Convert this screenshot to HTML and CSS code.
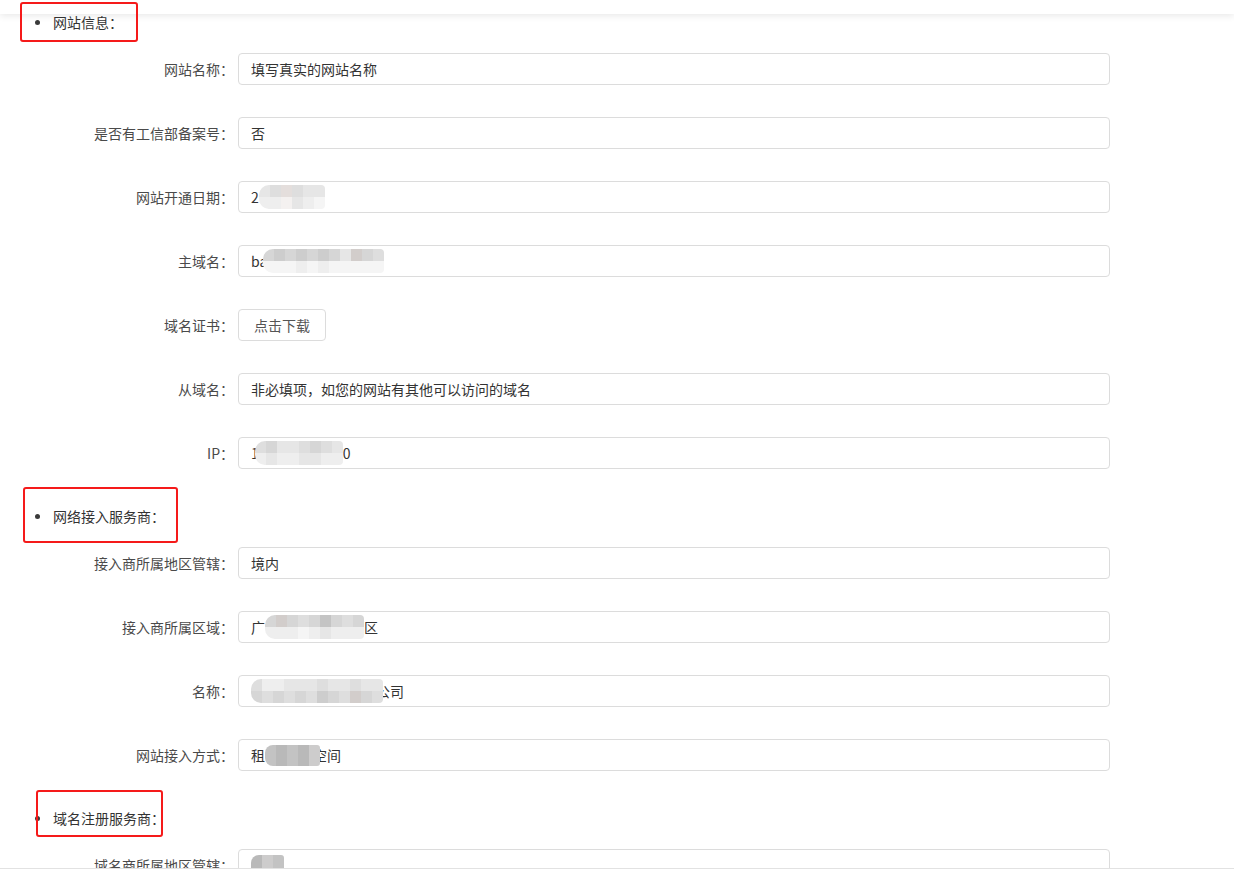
FILE: index.html
```html
<!DOCTYPE html>
<html lang="zh-CN">
<head>
<meta charset="utf-8">
<title>网站备案信息</title>
<link rel="stylesheet" href="styles.css">
</head>
<body>
<div class="topbar"></div>
<div class="page">
  <section class="section">
    <h3 class="heading">网站信息：<span class="mark mark-1"></span></h3>
    <div class="row"><label class="label">网站名称：</label><div class="field">填写真实的网站名称</div></div>
    <div class="row"><label class="label">是否有工信部备案号：</label><div class="field">否</div></div>
    <div class="row"><label class="label">网站开通日期：</label><div class="field">2<span class="mosaic">
      <i class="s5"></i><i class="s6"></i><i class="s4"></i><i class="s6"></i><i class="s3w"></i><i class="s6w"></i><i class="s4"></i><i class="s5"></i><i class="s5"></i><i class="s6"></i><i class="s5"></i><i class="s7"></i>
    </span></div></div>
    <div class="row"><label class="label">主域名：</label><div class="field">ba<span class="mosaic mosaic-over">
      <i class="s3"></i><i class="s7"></i><i class="s2"></i><i class="s7"></i><i class="s3"></i><i class="s7"></i><i class="s2"></i><i class="s6"></i><i class="s3"></i><i class="s7"></i><i class="s2"></i><i class="s6"></i><i class="s3"></i><i class="s7"></i><i class="s5"></i><i class="s7"></i><i class="s2w"></i><i class="s7"></i><i class="s3"></i><i class="s7"></i><i class="s4"></i><i class="s7"></i>
    </span></div></div>
    <div class="row"><label class="label">域名证书：</label><div class="cell"><button class="btn" type="button">点击下载</button></div></div>
    <div class="row"><label class="label">从域名：</label><div class="field">非必填项，如您的网站有其他可以访问的域名</div></div>
    <div class="row"><label class="label">IP：</label><div class="field">1<span class="mosaic mosaic-over">
      <i class="s4"></i><i class="s6"></i><i class="s3"></i><i class="s5"></i><i class="s5"></i><i class="s6"></i><i class="s5"></i><i class="s6"></i><i class="s4"></i><i class="s5"></i><i class="s3"></i><i class="s5"></i><i class="s4"></i><i class="s6"></i><i class="s5"></i><i class="s6"></i>
    </span>0</div></div>
  </section>

  <section class="section">
    <h3 class="heading">网络接入服务商：<span class="mark mark-2"></span></h3>
    <div class="row"><label class="label">接入商所属地区管辖：</label><div class="field">境内</div></div>
    <div class="row"><label class="label">接入商所属区域：</label><div class="field">广<span class="mosaic">
      <i class="s3"></i><i class="s6"></i><i class="s2w"></i><i class="s6"></i><i class="s3"></i><i class="s6"></i><i class="s4"></i><i class="s7"></i><i class="s3"></i><i class="s6"></i><i class="s1"></i><i class="s5"></i><i class="s3"></i><i class="s6"></i><i class="s4"></i><i class="s6"></i><i class="s3"></i><i class="s6"></i>
    </span>区</div></div>
    <div class="row"><label class="label">名称：</label><div class="field"><span class="mosaic mosaic-cover">
      <i class="s4"></i><i class="s3"></i><i class="s6"></i><i class="s4"></i><i class="s6"></i><i class="s3"></i><i class="s5"></i><i class="s4"></i><i class="s5"></i><i class="s3"></i><i class="s5"></i><i class="s4"></i><i class="s4"></i><i class="s2"></i><i class="s5"></i><i class="s3"></i><i class="s5"></i><i class="s4"></i><i class="s4"></i><i class="s2w"></i><i class="s5"></i><i class="s3"></i><i class="s5"></i><i class="s4"></i>
    </span>公司</div></div>
    <div class="row"><label class="label">网站接入方式：</label><div class="field">租<span class="mosaic mosaic-dark mosaic-cover">
      <i class="d2"></i><i class="d1"></i><i class="d2"></i><i class="d1"></i><i class="d3"></i>
    </span>空间</div></div>
  </section>

  <section class="section">
    <h3 class="heading">域名注册服务商：<span class="mark mark-3"></span></h3>
    <div class="row"><label class="label">域名商所属地区管辖：</label><div class="field"><span class="mosaic mosaic-dark">
      <i class="d1"></i><i class="d3"></i><i class="d2"></i>
    </span></div></div>
  </section>
</div>
<div class="footer"></div>
</body>
</html>
```

FILE: styles.css
```css
* { box-sizing: border-box; }

html, body {
  margin: 0;
  padding: 0;
  background: #ffffff;
}

body {
  font-family: "Noto Sans CJK SC", "Noto Sans", sans-serif;
  font-size: 14px;
  color: #333333;
  overflow: hidden;
}

.topbar {
  position: absolute;
  top: 0;
  left: 0;
  right: 0;
  height: 14px;
  background: #ffffff;
  box-shadow: 0 2px 7px rgba(0, 0, 0, 0.09);
}

.page {
  position: relative;
  z-index: 1;
  padding-top: 7px;
}

.heading {
  position: relative;
  margin: 0 0 16px 0;
  height: 30px;
  line-height: 30px;
  padding-left: 53px;
  font-size: 14px;
  font-weight: normal;
  color: #333333;
}

.heading::before {
  content: "";
  position: absolute;
  left: 35px;
  top: 13px;
  width: 5px;
  height: 5px;
  border-radius: 50%;
  background: #3a3a3a;
}

.mark {
  position: absolute;
  border: 2px solid #f51a1a;
  border-radius: 3px;
  z-index: 3;
}

.mark-1 { left: 20px; top: -5px; width: 118px; height: 40px; }
.mark-2 { left: 23px; top: -14px; width: 155px; height: 56px; }
.mark-3 { left: 36px; top: -13px; width: 127px; height: 47px; }

.row {
  display: grid;
  grid-template-columns: 234px 872px;
  column-gap: 4px;
  height: 32px;
  margin-bottom: 32px;
}

.label {
  text-align: right;
  line-height: 32px;
  color: #4a4a4a;
  white-space: nowrap;
}

.field {
  display: flex;
  align-items: center;
  height: 32px;
  padding: 0 12px;
  border: 1px solid #dcdcdc;
  border-radius: 4px;
  background: #ffffff;
  color: #333333;
  white-space: nowrap;
}

.cell {
  display: flex;
  align-items: center;
}

.btn {
  width: 88px;
  height: 32px;
  padding: 0;
  border: 1px solid #dcdcdc;
  border-radius: 4px;
  background: #ffffff;
  font-family: inherit;
  font-size: 14px;
  color: #555555;
}

/* pixelated redaction */
.mosaic {
  display: inline-grid;
  grid-template-rows: 12px 12px;
  grid-auto-flow: column;
  grid-auto-columns: 11px;
  border-radius: 10px 4px 4px 10px;
  overflow: hidden;
  filter: blur(0.4px);
  position: relative;
}

.mosaic-over { margin-left: -4px; }
.mosaic-cover { margin-right: -7px; }

.mosaic-dark {
  grid-template-rows: 21px;
  grid-auto-columns: 11px;
  border-radius: 8px 3px 3px 8px;
}

.mosaic i { display: block; }

.s1 { background: #c4c4c4; }
.s2 { background: #cdcdcd; }
.s2w { background: #d2cdcb; }
.s3 { background: #d6d6d6; }
.s3w { background: #e4dedc; }
.s4 { background: #dedede; }
.s5 { background: #e6e6e6; }
.s6 { background: #eeeeee; }
.s6w { background: #f4f1f0; }
.s7 { background: #f5f5f5; }

.d1 { background: #b9b9b9; }
.d2 { background: #c3c3c3; }
.d3 { background: #cdcccc; }

.footer {
  position: fixed;
  left: 0;
  right: 0;
  bottom: 0;
  height: 5px;
  border-top: 1px solid #e2e2e2;
  background: #ffffff;
  z-index: 5;
}
```
